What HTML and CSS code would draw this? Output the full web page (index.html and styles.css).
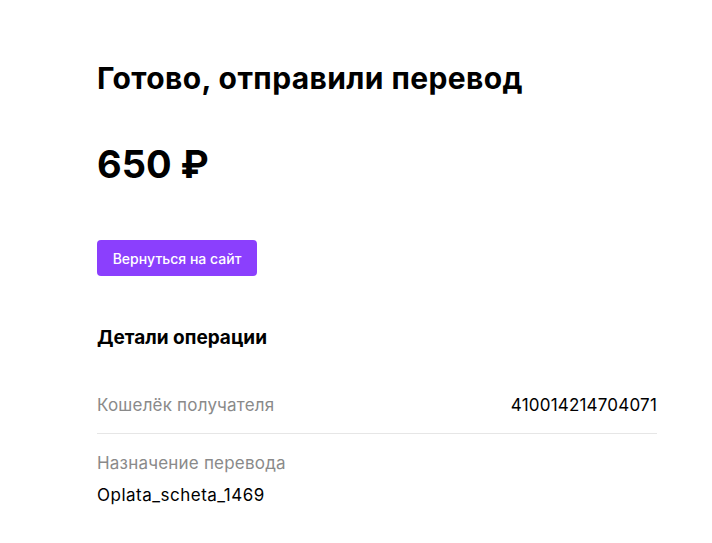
FILE: index.html
```html
<!DOCTYPE html>
<html>
<head>
    <title>Перевод</title>
    <link rel="stylesheet" href="styles.css">
</head>
<body>
    <div class="page">
        <h1 class="title">Готово, отправили перевод</h1>
        <div class="amount">650 ₽</div>
        <button class="back-btn">Вернуться на сайт</button>
        <h2 class="details-title">Детали операции</h2>
        <div class="row">
            <span class="label">Кошелёк получателя</span>
            <span class="value">410014214704071</span>
        </div>
        <div class="row row-stack">
            <span class="label">Назначение перевода</span>
            <span class="value">Oplata_scheta_1469</span>
        </div>
    </div>
</body>
</html>
```

FILE: styles.css
```css
body {
    margin: 0;
    background-color: #fff;
    font-family: Inter, "Noto Sans", sans-serif;
    color: #000;
}
.page {
    width: 560px;
    padding: 58px 0 0 97px;
}
.title {
    font-size: 30px;
    font-weight: 700;
    line-height: 40px;
    letter-spacing: 0.4px;
    margin: 0;
}
.amount {
    font-size: 38px;
    font-weight: 700;
    line-height: 48px;
    margin-top: 42px;
}
.back-btn {
    display: block;
    margin-top: 52px;
    height: 36px;
    width: 160px;
    border: none;
    border-radius: 4px;
    background-color: #8b3ffd;
    color: #fff;
    font-family: inherit;
    font-size: 14px;
    font-weight: 500;
    cursor: pointer;
}
.details-title {
    font-size: 19px;
    font-weight: 700;
    line-height: 24px;
    margin: 50px 0 0;
}
.row {
    display: flex;
    justify-content: space-between;
    padding: 43px 0 16px;
    border-bottom: 1px solid #e6e6e6;
    font-size: 17px;
    line-height: 24px;
    letter-spacing: 0.2px;
}
.row-stack {
    flex-direction: column;
    border-bottom: none;
    padding-top: 17px;
    gap: 8px;
}
.row-stack .value {
    letter-spacing: 0.5px;
}
.label {
    color: #8a8a8a;
}
```
